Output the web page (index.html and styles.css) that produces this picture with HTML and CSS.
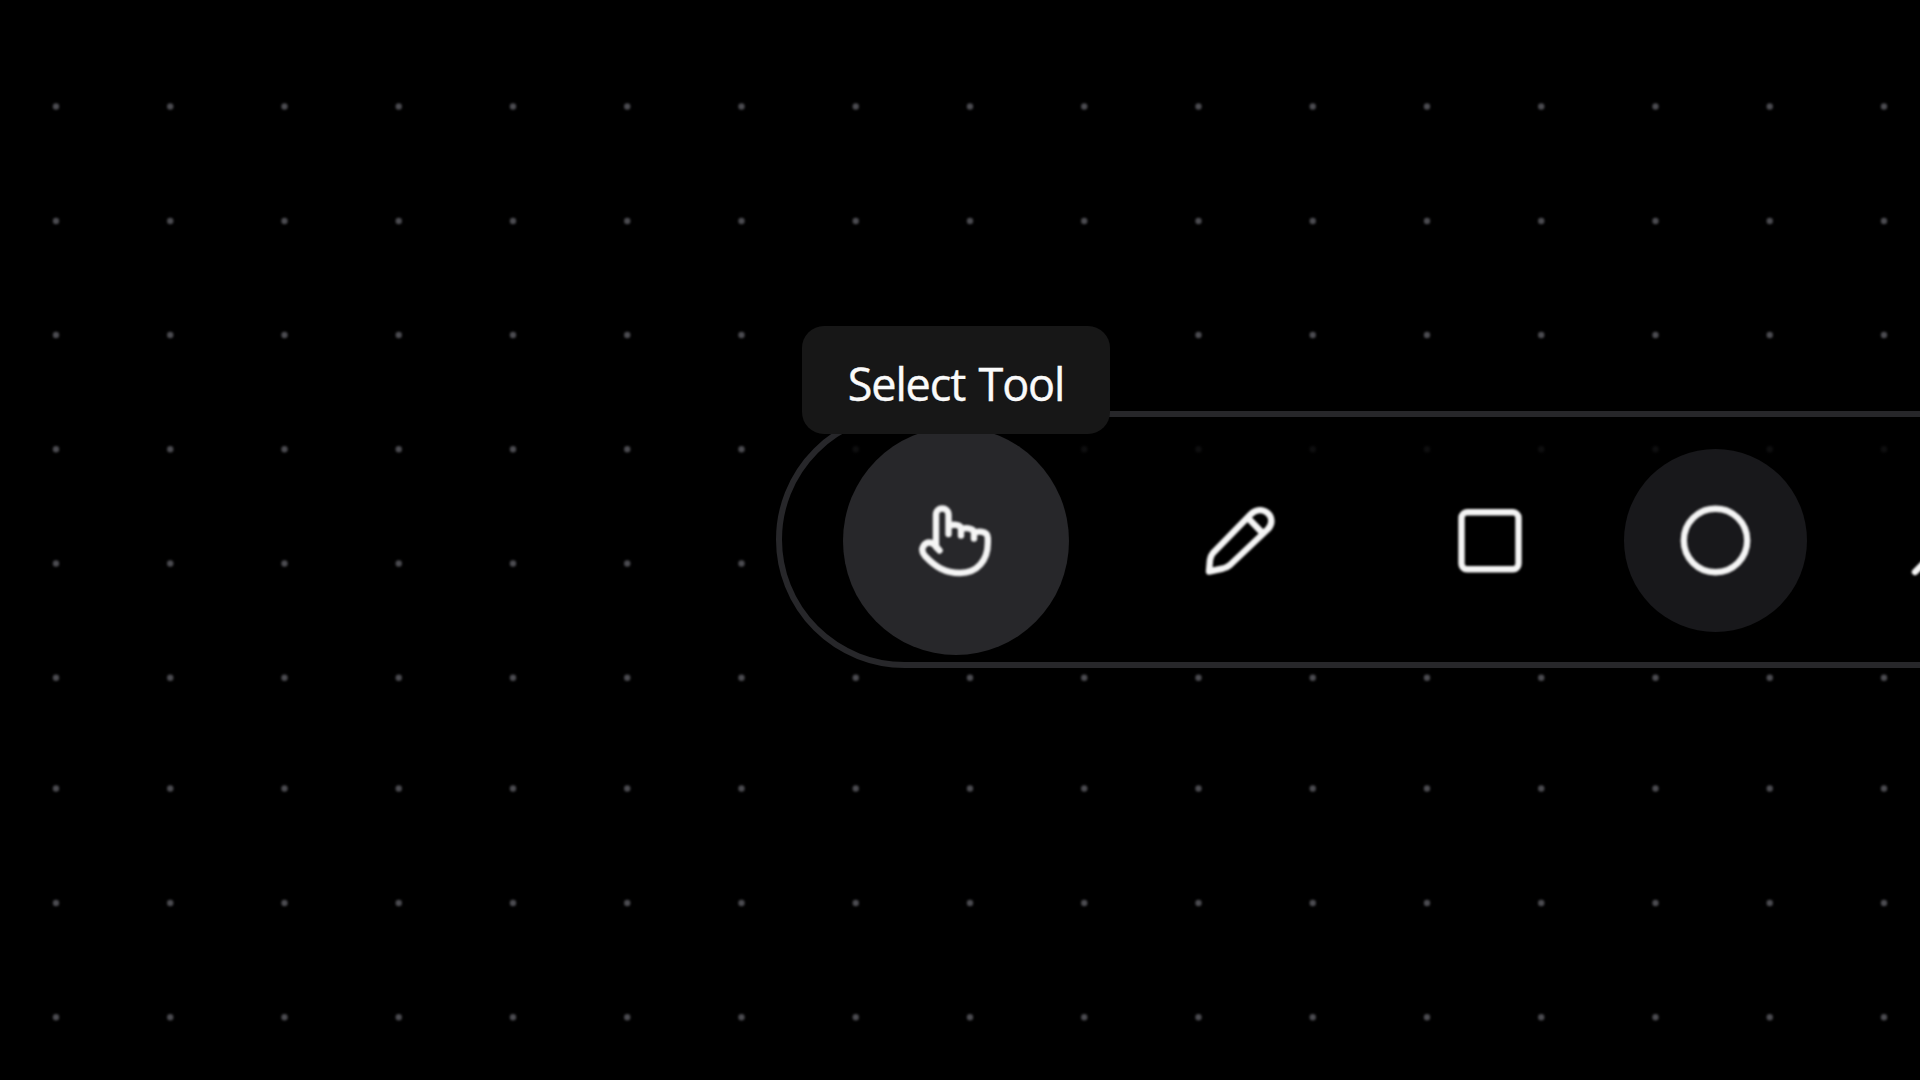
FILE: index.html
```
<!DOCTYPE html>
<html lang="en">
<head>
<meta charset="utf-8">
<title>Canvas toolbar</title>
<link rel="stylesheet" href="styles.css">
</head>
<body>
<main class="canvas">
  <svg class="dots" viewBox="0 0 1920 1080" aria-hidden="true">
    <path d="M56 106.500H1921M56 221H1921M56 335H1921M56 449.300H1921M56 563.500H1921M56 677.700H1921M56 788.500H1921M56 903H1921M56 1017.300H1921"/>
  </svg>
  <nav class="toolbar">
    <button class="tool tool-active" aria-label="Select">
      <svg class="icon" viewBox="0 0 77 77"><path d="M21.500 48.500L18 45V13C18 4.300 30.500 4.300 30.500 13V32V25C33.500 21.500 43 22 43 27V33.500V28C45.500 25 56 25.500 56 31V36.500V32C58.500 28.500 69.800 28.500 69.800 36V41C69.800 58 59.500 71 42 71C27 71 17.500 65 7 54C1 47 6.500 40.500 11.500 40.500Q15.500 40.500 21.500 48.500"/></svg>
      <span class="tooltip">Select Tool</span>
    </button>
    <button class="tool tool-pencil" aria-label="Pencil">
      <svg class="icon" viewBox="0 0 77 77"><path d="M7 69.500L8 58Q8.500 54 11 51L48.500 12.500C60 .5 76.500 15.500 66 27L28 63Q25 65.500 21 66.500zM46 16L59 29.500"/></svg>
    </button>
    <button class="tool tool-rectangle" aria-label="Rectangle">
      <svg class="icon" viewBox="0 0 77 77"><rect x="9.500" y="10.300" width="57" height="57" rx="5.500"/></svg>
    </button>
    <button class="tool tool-hover" aria-label="Ellipse">
      <svg class="icon" viewBox="0 0 77 77"><circle cx="38.500" cy="38.500" r="31.700"/></svg>
    </button>
    <button class="tool tool-line" aria-label="Line">
      <svg class="icon" viewBox="0 0 77 77"><path d="M9 70L70 9"/></svg>
    </button>
  </nav>
</main>
</body>
</html>
```
FILE: styles.css
```
* { box-sizing: border-box; }
body { margin: 0; background: #000; }
.canvas {
  position: relative;
  width: 1920px;
  height: 1080px;
  padding: 411px 0 0 776px;
  overflow: hidden;
}
.dots {
  position: absolute;
  inset: 0;
  fill: none;
  stroke: #4b4b50;
  stroke-width: 6.4;
  stroke-linecap: round;
  stroke-dasharray: 0 114.25;
  filter: blur(1.3px);
}
.toolbar {
  position: relative;
  display: flex;
  align-items: center;
  width: 1500px;
  height: 257px;
  padding: 2px 0 0 61px;
  border: 6px solid #27272a;
  border-radius: 129px;
  background: linear-gradient(rgba(0, 0, 0, 0.82) 60px, #000 60px);
}
.tool {
  position: relative;
  display: flex;
  flex: none;
  align-items: center;
  justify-content: center;
  width: 183px;
  height: 183px;
  padding: 0;
  border: 0;
  border-radius: 50%;
  background: transparent;
  color: #f5f5f5;
}
.tool-active { width: 226px; height: 228px; background: #27272a; }
.tool-pencil { margin-left: 79.5px; }
.tool-rectangle { margin-left: 67.5px; }
.tool-hover { margin: 0 0 1px 42px; background: #18181b; }
.tool-line { margin-left: 46px; }
.icon {
  width: 77px;
  height: 77px;
  fill: none;
  stroke: currentColor;
  stroke-width: 6.4;
  stroke-linecap: round;
  stroke-linejoin: round;
  filter: blur(0.8px);
}
.tooltip {
  position: absolute;
  left: -41px;
  top: -101px;
  width: 308px;
  height: 108px;
  border-radius: 22px;
  background: #171717;
  color: #fafafa;
  font: 45px/116px "Open Sans", "Noto Sans", sans-serif;
  letter-spacing: -1.15px;
  word-spacing: 3px;
  text-align: center;
  white-space: nowrap;
  -webkit-text-stroke: 0.4px #fafafa;
}
```
